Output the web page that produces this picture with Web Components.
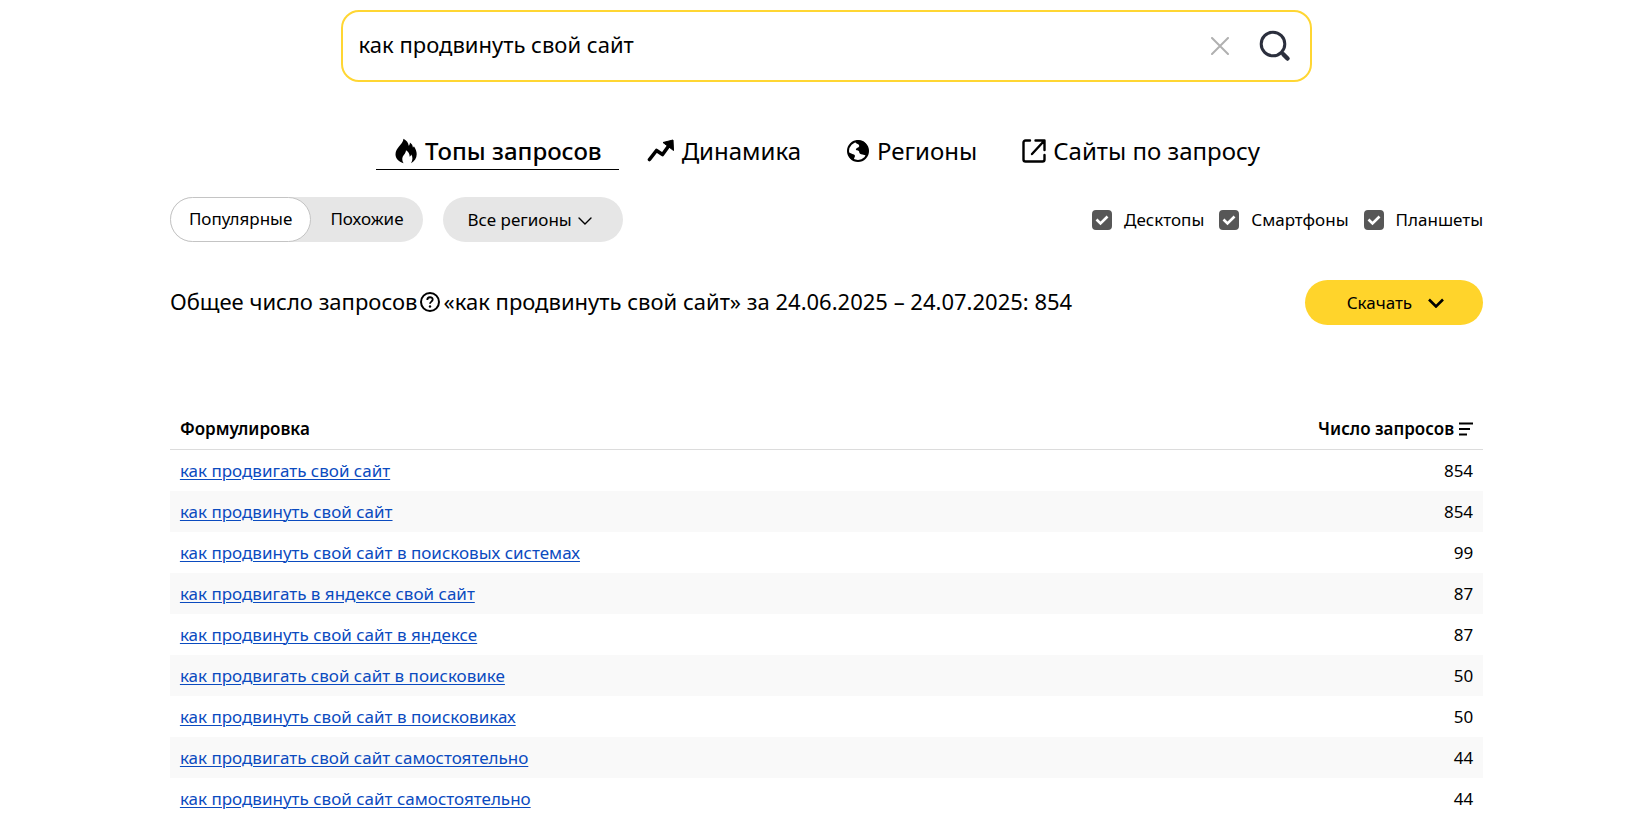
<!DOCTYPE html>
<html lang="ru">
<head>
<meta charset="utf-8">
<meta name="viewport" content="width=device-width, initial-scale=1">
<title>Подбор слов</title>
<style>
  body {
    margin: 0;
    background: #fff;
    color: #000;
    font: 17px/24px "Noto Sans", "Open Sans", sans-serif;
  }
</style>
</head>
<body>
<word-stat>
  <search-box slot="search" value="как продвинуть свой сайт"></search-box>

  <tab-bar slot="tabs">
    <tab-item icon="fire" active>Топы запросов</tab-item>
    <tab-item icon="trend">Динамика</tab-item>
    <tab-item icon="globe">Регионы</tab-item>
    <tab-item icon="external">Сайты по запросу</tab-item>
  </tab-bar>

  <filter-bar slot="filters">
    <segment-switch>
      <segment-item active>Популярные</segment-item>
      <segment-item>Похожие</segment-item>
    </segment-switch>
    <region-select label="Все регионы"></region-select>
    <device-check slot="end">Десктопы</device-check>
    <device-check slot="end">Смартфоны</device-check>
    <device-check slot="end">Планшеты</device-check>
  </filter-bar>

  <total-line slot="total">
    Общее число запросов
    <span slot="rest">«как продвинуть свой сайт» за 24.06.2025 – 24.07.2025: 854</span>
    <download-button slot="action">Скачать</download-button>
  </total-line>

  <query-table></query-table>
</word-stat>

<script>
const ICONS = {
  fire: '<svg width="24" height="26" viewBox="0 0 24 26"><path d="M9.500 .8c3.200 1.700 5 4.200 5.200 7 .9-.8 1.300-2 1.200-3.300C18 6 18.800 7.600 18.900 9.500c.5-.2.8-.6 1-1.200 1.800 2.500 2.800 5.200 2.800 8 0 4-2.200 7-5.700 8.900 1.800-2.900 1.900-5.800.3-8.600-.3 1-.8 1.700-1.600 2.100-.1-2.800-1.100-4.900-3.700-6.500-.2 2-1 3.300-2.200 4.800-1.900 2.300-2.100 5.200-.3 8.200C4.500 23.500 1.500 20.500 1.500 16.200c0-3.200 1.700-5.400 3.500-7.700C6.900 6 9.200 4.200 9.500.8z" fill="#000"/></svg>',
  trend: '<svg width="28" height="24" viewBox="0 0 28 24"><path d="M2.500 20.500l7-9 6 4L22 6.500" fill="none" stroke="#000" stroke-width="3.600" stroke-linecap="round" stroke-linejoin="round"/><path d="M16 3.500L26 1l.5 10.500z" fill="#000" stroke="#000" stroke-linejoin="round"/></svg>',
  globe: '<svg width="24" height="24" viewBox="0 0 24 24"><circle cx="12" cy="12" r="10" fill="#fff" stroke="#000" stroke-width="2"/><path d="M10 1.500c5-1 9 1 11.500 6 1.200 3.500.5 7-1.300 9.500-1.200-1-2.500-1.300-3.700-1.500-2-.1-3.300-1.100-3.300-2.600 0-1.500-2.600-1.100-3.400-2.400.2-1.800 3-1.800 3.400-3.300.2-1.500-1-2-2.700-2.700-1-1-1-2-.5-3z" fill="#000"/><path d="M2 13.500c2 .3 3.500 1.300 6 2 1.500.8 1 2.300.3 3.300l-.8 2.700C4 19.500 2 17 2 13.500z" fill="#000"/></svg>',
  external: '<svg width="24" height="24" viewBox="0 0 24 24"><path d="M8 1.500H3.500a2 2 0 0 0-2 2v17a2 2 0 0 0 2 2h17a2 2 0 0 0 2-2V16M13.500 1.500h9V11M22 2L10 15" fill="none" stroke="#000" stroke-width="2.400" stroke-linecap="round" stroke-linejoin="round"/></svg>',
  clear: '<svg width="18" height="18" viewBox="0 0 18 18"><path d="M1 1l16 16M17 1L1 17" stroke="#b0b0b0" stroke-width="2" stroke-linecap="round"/></svg>',
  search: '<svg width="32" height="32" viewBox="0 0 32 32"><circle cx="14" cy="14" r="11.800" fill="none" stroke="#2b2f3d" stroke-width="3"/><path d="M22.500 22.500l1.500 1.500" stroke="#2b2f3d" stroke-width="2.500"/><path d="M24.500 24.500l4 4" stroke="#2b2f3d" stroke-width="4.500" stroke-linecap="round"/></svg>',
  thin: '<svg width="14" height="8" viewBox="0 0 14 8"><path d="M1 1l6 6 6-6" fill="none" stroke="#000" stroke-width="1.400" stroke-linecap="round"/></svg>',
  bold: '<svg width="16" height="10" viewBox="0 0 16 10"><path d="M1 1.500l7 7 7-7" fill="none" stroke="#000" stroke-width="2.600"/></svg>',
  help: '<svg width="20" height="20" viewBox="0 0 20 20"><circle cx="10" cy="10" r="9" fill="none" stroke="#000" stroke-width="2"/><path d="M7.300 8c0-3.600 5.400-3.600 5.400-.4 0 2-2.700 2.100-2.700 4.200" fill="none" stroke="#000" stroke-width="1.800"/><circle cx="10" cy="14.500" r="1.200"/></svg>',
  sort: '<svg width="14" height="14" viewBox="0 0 14 14"><path d="M0 1.500h14M0 7h11M0 12.500h8" stroke="#000" stroke-width="2.200"/></svg>'
};

class Base extends HTMLElement {
  connectedCallback() {
    if (this.shadowRoot) return;
    this.attachShadow({ mode: 'open' }).innerHTML =
      `<style>
        *, :host { box-sizing: border-box; }
        svg { display: block; flex: none; }
        button, input, select { font: inherit; color: inherit; margin: 0; }
        button { border: 0; background: none; padding: 0; cursor: pointer; }
        ${this.css()}
      </style>${this.html()}`;
  }
}

customElements.define('word-stat', class extends Base {
  css() { return `
    :host { display: block; padding: 10px 10%; }
    main { display: flex; flex-direction: column; padding: 0 1px 0 5px; }
    .search { width: 74%; margin: 0 auto 50px; }
    .filters { margin-top: 27px; }
    .total { margin: 38px 0 80px; }
  `; }
  html() { return `<main>
    <div class="search"><slot name="search"></slot></div>
    <slot name="tabs"></slot>
    <div class="filters"><slot name="filters"></slot></div>
    <div class="total"><slot name="total"></slot></div>
    <slot></slot>
  </main>`; }
});

customElements.define('search-box', class extends Base {
  css() { return `
    :host { display: block; }
    form { display: flex; align-items: center; height: 72px; padding: 0 19px 0 16px;
      border: 2px solid #ffd633; border-radius: 18px; background: #fff; }
    input { flex: 1; min-width: 0; border: 0; outline: 0; padding: 0 0 4px; background: none;
      font-size: 22px; line-height: 32px; }
    .clear { margin-right: 30px; }
  `; }
  html() { return `<form role="search">
    <input type="text" aria-label="Запрос" value="${this.getAttribute('value')}">
    <button class="clear" type="reset" aria-label="Очистить">${ICONS.clear}</button>
    <button type="submit" aria-label="Найти">${ICONS.search}</button>
  </form>`; }
});

customElements.define('tab-bar', class extends Base {
  css() { return `
    :host { display: block; }
    nav { display: flex; justify-content: center; gap: 10px; }
  `; }
  html() { return `<nav><slot></slot></nav>`; }
});

customElements.define('tab-item', class extends Base {
  css() { return `
    :host { display: block; }
    a { display: flex; align-items: center; gap: 7px; height: 38px; padding: 0 17px 0 18px;
      border-bottom: 1px solid transparent; color: #000; text-decoration: none;
      font-size: 24px; line-height: 36px; white-space: nowrap; }
    :host([active]) a { border-color: #000; font-weight: 500; }
  `; }
  html() { return `<a href="#">${ICONS[this.getAttribute('icon')]}<span><slot></slot></span></a>`; }
});

customElements.define('filter-bar', class extends Base {
  css() { return `
    :host { display: flex; align-items: center; justify-content: space-between; }
    div { display: flex; align-items: center; gap: 20px; }
    .end { gap: 15px; }
  `; }
  html() { return `<div><slot></slot></div><div class="end"><slot name="end"></slot></div>`; }
});

customElements.define('segment-switch', class extends Base {
  css() { return `
    :host { display: flex; height: 45px; border-radius: 23px; background: #e6e6e6; }
  `; }
  html() { return `<slot></slot>`; }
});

customElements.define('segment-item', class extends Base {
  css() { return `
    :host { display: flex; }
    button { padding: 0 18px 2px; border: 1px solid transparent; border-radius: 23px; }
    :host([active]) button { background: #fff; border-color: #c4c4c4; }
  `; }
  html() { return `<button type="button" aria-pressed="${this.hasAttribute('active')}"><slot></slot></button>`; }
});

customElements.define('region-select', class extends Base {
  css() { return `
    :host { display: grid; align-items: center; }
    select { grid-area: 1 / 1; appearance: none; width: 100%; height: 45px; padding: 0 50px 0 25px; border: 0;
      border-radius: 23px; background: #e6e6e6; }
    svg { grid-area: 1 / 1; justify-self: end; margin: 2px 31px 0 0; pointer-events: none; }
  `; }
  html() { return `<select aria-label="Регионы"><option>${this.getAttribute('label')}</option></select>${ICONS.thin}`; }
});

customElements.define('device-check', class extends Base {
  css() { return `
    :host { display: block; }
    label { display: flex; align-items: center; gap: 12px; cursor: pointer; }
    .box { display: grid; }
    input, svg { grid-area: 1 / 1; }
    input { appearance: none; width: 20px; height: 20px; border-radius: 4px; border: 2px solid #575757; }
    input:checked { background: #575757; }
    svg { pointer-events: none; }
  `; }
  html() { return `<label><span class="box"><input type="checkbox" checked>
    <svg width="20" height="20" viewBox="0 0 20 20"><path d="M4.500 9.500l4 4 7-7" fill="none" stroke="#fff" stroke-width="2.600"/></svg></span>
    <span><slot></slot></span></label>`; }
});

customElements.define('total-line', class extends Base {
  css() { return `
    :host { display: flex; align-items: center; justify-content: space-between; }
    p { display: flex; align-items: center; gap: 3px; margin: 0; padding-bottom: 4px; font-size: 22px; line-height: 32px; }
    p button { padding-top: 3px; }
  `; }
  html() { return `<p><span><slot></slot></span><button type="button" aria-label="Справка">${ICONS.help}</button><slot name="rest"></slot></p>
    <slot name="action"></slot>`; }
});

customElements.define('download-button', class extends Base {
  css() { return `
    :host { display: block; }
    button { display: flex; align-items: center; gap: 16px; height: 45px; padding: 0 39px 0 42px;
      border-radius: 23px; background: #ffd42b; }
  `; }
  html() { return `<button type="button"><span><slot></slot></span>${ICONS.bold}</button>`; }
});

const ROWS = [
  ['как продвигать свой сайт', 854],
  ['как продвинуть свой сайт', 854],
  ['как продвинуть свой сайт в поисковых системах', 99],
  ['как продвигать в яндексе свой сайт', 87],
  ['как продвинуть свой сайт в яндексе', 87],
  ['как продвигать свой сайт в поисковике', 50],
  ['как продвинуть свой сайт в поисковиках', 50],
  ['как продвигать свой сайт самостоятельно', 44],
  ['как продвинуть свой сайт самостоятельно', 44]
];

customElements.define('query-table', class extends Base {
  css() { return `
    :host { display: block; margin-bottom: -10px; }
    table { width: 100%; border-collapse: separate; border-spacing: 0; }
    th { height: 45px; padding: 3px 10px 0; border-bottom: 1px solid #dcdcdc; font-weight: 600; text-align: left; }
    td { height: 41px; padding: 0 10px; }
    tbody tr:nth-child(even) { background: #f9f9f9; }
    .num { text-align: right; }
    .sort { display: inline-flex; align-items: center; gap: 5px; }
    a { color: #0b4bbf; text-decoration: underline; text-decoration-thickness: 1px; text-underline-offset: 2px; }
  `; }
  html() { return `<table>
    <thead><tr><th scope="col">Формулировка</th>
      <th scope="col" class="num"><span class="sort">Число запросов ${ICONS.sort}</span></th></tr></thead>
    <tbody>${ROWS.map(([q, n]) => `<tr><td><a href="#">${q}</a></td><td class="num">${n}</td></tr>`).join('')}</tbody>
  </table>`; }
});
</script>
</body>
</html>
